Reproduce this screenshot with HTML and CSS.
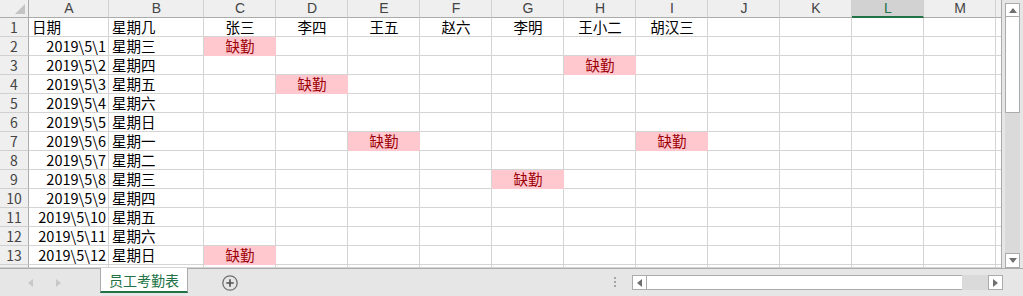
FILE: index.html
```html
<!DOCTYPE html>
<html lang="zh-CN">
<head>
  <meta charset="UTF-8" />
  <title>员工考勤表</title>
  <link rel="stylesheet" href="styles.css">
</head>
<body>
  <div class="app">
    <div class="main">
      <div class="sheet" id="sheet"></div>

      <div class="vscroll">
        <span class="sbtn up"><svg viewBox="0 0 8 5" width="8" height="5"><polygon points="0,5 8,5 4,0" /></svg></span>
        <span class="vthumb"></span>
        <span class="vtrack"></span>
        <span class="sbtn down"><svg viewBox="0 0 8 5" width="8" height="5"><polygon points="0,0 8,0 4,5" /></svg></span>
      </div>
    </div>

    <div class="tabbar">
      <div class="nav">
        <svg viewBox="0 0 5 8" width="5" height="8"><polygon points="5,0 5,8 0,4" /></svg>
        <svg viewBox="0 0 5 8" width="5" height="8"><polygon points="0,0 0,8 5,4" /></svg>
      </div>
      <div class="tab">员工考勤表</div>
      <div class="add">
        <svg viewBox="0 0 16 16" width="16" height="16">
          <circle cx="8" cy="8" r="7.2" fill="none" stroke="#707070" stroke-width="1.3" />
          <path d="M8 4.3v7.4M4.3 8h7.4" stroke="#505050" stroke-width="1.6" />
        </svg>
      </div>
      <div class="spacer"></div>
      <div class="grip"><i></i><i></i><i></i></div>
      <div class="hscroll">
        <span class="sbtn"><svg viewBox="0 0 5 8" width="5" height="8"><polygon points="5,0 5,8 0,4" /></svg></span>
        <span class="hthumb"></span>
        <span class="htrack"></span>
        <span class="sbtn"><svg viewBox="0 0 5 8" width="5" height="8"><polygon points="0,0 0,8 5,4" /></svg></span>
      </div>
    </div>
  </div>

  <script>
    const letters = ['A', 'B', 'C', 'D', 'E', 'F', 'G', 'H', 'I', 'J', 'K', 'L', 'M', ''];
    const names = ['张三', '李四', '王五', '赵六', '李明', '王小二', '胡汉三'];
    const days = ['三', '四', '五', '六', '日', '一', '二', '三', '四', '五', '六', '日'];
    // row number -> columns marked as absent
    const absent = { 2: ['C'], 3: ['H'], 4: ['D'], 7: ['E', 'I'], 9: ['G'], 13: ['C'] };
    const sheet = document.getElementById('sheet');

    function cell(text, cls) {
      const div = document.createElement('div');
      div.className = 'cell ' + (cls || '');
      div.textContent = text;
      sheet.appendChild(div);
    }

    cell('', 'corner');
    letters.forEach(l => cell(l, 'col-hd' + (l === 'L' ? ' sel' : '')));

    // rows 1-13 plus the sliver of row 14 above the tabs
    for (let r = 1; r <= 14; r++) {
      cell(r <= 13 ? r : '', 'row-hd');
      letters.forEach((l, i) => {
        if (r === 1) {
          if (i === 0) cell('日期', 'left');
          else if (i === 1) cell('星期几', 'left');
          else cell(names[i - 2] || '', 'center');
        } else if (r <= 13) {
          if (i === 0) cell('2019\\5\\' + (r - 1), 'right');
          else if (i === 1) cell('星期' + days[r - 2], 'left');
          else if ((absent[r] || []).includes(l)) cell('缺勤', 'center bad');
          else cell('');
        } else {
          cell('');
        }
      });
    }
  </script>
</body>
</html>
```

FILE: styles.css
```css
:root {
  --grid: #d4d4d4;
  --edge: #ababab;
  --head-bg: #efefef;
  --bar-bg: #e6e6e6;
  --green: #217346;
}

* {
  box-sizing: border-box;
  margin: 0;
  padding: 0;
}

body {
  font-family: 'Noto Sans CJK SC', 'Noto Sans', sans-serif;
  background: #fff;
  width: 1023px;
  height: 296px;
  overflow: hidden;
}

.app {
  display: flex;
  flex-direction: column;
  height: 296px;
}

.main {
  display: flex;
  height: 268px;
}

/* Worksheet grid */
.sheet {
  display: grid;
  grid-template-columns: 29px 80px 95px repeat(11, 72px) 5px;
  grid-template-rows: 18px repeat(13, 19px) 3px;
  width: 1002px;
  overflow: hidden;
  border-right: 1px solid var(--edge);
}

.cell {
  border-right: 1px solid var(--grid);
  border-bottom: 1px solid var(--grid);
  font-size: 14.5px;
  line-height: 18px;
  padding: 0 2px 0 3px;
  white-space: nowrap;
  color: #000;
}
.left { text-align: left; }
.right { text-align: right; }
.center { text-align: center; }

.bad {
  background: #ffc7ce;
  color: #9c0006;
  border-color: #ffc7ce;
}

.corner,
.col-hd,
.row-hd {
  background: var(--head-bg);
  color: #444;
  text-align: center;
  font-size: 14px;
}
.col-hd {
  font-family: 'Liberation Sans', sans-serif;
  line-height: 17px;
  border-right-color: #d0d0d0;
  border-bottom-color: var(--edge);
}
.col-hd.sel {
  background: #d2d2d2;
  color: var(--green);
  border-bottom: 2px solid var(--green);
}
.row-hd {
  padding: 0;
  border-right-color: var(--edge);
  border-bottom-color: #d0d0d0;
}
.corner {
  position: relative;
  border-right-color: var(--edge);
  border-bottom-color: var(--edge);
}
.corner:after {
  content: '';
  position: absolute;
  right: 3px;
  bottom: 3px;
  border-left: 10px solid transparent;
  border-bottom: 10px solid #c4c4c4;
}

/* Scrollbars */
.vscroll {
  width: 21px;
  background: var(--bar-bg);
  display: flex;
  flex-direction: column;
  padding: 3px 3px 0 3px;
}
.sbtn {
  display: flex;
  align-items: center;
  justify-content: center;
  background: #fff;
  border: 1px solid var(--edge);
}
.sbtn svg { fill: #707070; }
.vscroll .sbtn { height: 14px; }
.vscroll .down { height: 15px; }
.vthumb {
  height: 96px;
  background: #fff;
  border: 1px solid var(--edge);
  border-top: 0;
}
.vtrack {
  flex: 1;
  background: #dadada;
}

/* Sheet tabs */
.tabbar {
  flex: 1;
  display: flex;
  align-items: flex-start;
  background: var(--bar-bg);
  border-top: 1px solid var(--edge);
}
.nav {
  width: 100px;
  height: 27px;
  display: flex;
  align-items: center;
  gap: 23px;
  padding-left: 28px;
}
.nav svg { fill: #c8c8c8; }

.tab {
  width: 88px;
  height: 25px;
  margin-top: -1px;
  background: #fff;
  border-left: 1px solid var(--edge);
  border-right: 1px solid var(--edge);
  border-bottom: 2px solid var(--green);
  color: var(--green);
  font-size: 14px;
  line-height: 24px;
  text-align: center;
}

.add {
  margin-left: 34px;
  height: 27px;
  display: flex;
  align-items: center;
}

.spacer { flex: 1; }

.grip {
  display: flex;
  flex-direction: column;
  gap: 2px;
  margin-top: 8px;
  margin-right: 16px;
}
.grip i {
  width: 2px;
  height: 2px;
  background: #a6a6a6;
}

.hscroll {
  width: 371px;
  height: 15px;
  margin-top: 6px;
  margin-right: 20px;
  display: flex;
}
.hscroll .sbtn { width: 15px; }
.hthumb {
  width: 315px;
  background: #fff;
  border-top: 1px solid var(--edge);
  border-bottom: 1px solid var(--edge);
}
.htrack {
  flex: 1;
  background: #dadada;
}
```
